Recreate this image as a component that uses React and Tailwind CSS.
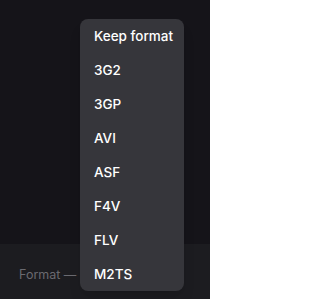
const formats = ["Keep format", "3G2", "3GP", "AVI", "ASF", "F4V", "FLV", "M2TS"];

export default function App() {
  return (
    <div
      className="relative w-[210px] h-[299px] overflow-hidden bg-[#151419] flex flex-col"
      style={{ fontFamily: "Inter, 'Noto Sans', sans-serif" }}
    >
      <div className="flex-1" />
      <div className="h-[55px] bg-[#1c1c20] flex items-start pt-[23px] pl-[19px]">
        <span className="text-[12.5px] leading-[16px] text-[#6a6a70]">Format —</span>
      </div>

      <div className="absolute left-[80px] top-[19px] w-[104px] rounded-lg bg-[#36363b] shadow-lg">
        {formats.map((f) => (
          <div
            key={f}
            className="h-[34px] flex items-center pt-[1px] pl-[14px] text-[13.5px] font-medium text-white"
          >
            {f}
          </div>
        ))}
      </div>
    </div>
  );
}
